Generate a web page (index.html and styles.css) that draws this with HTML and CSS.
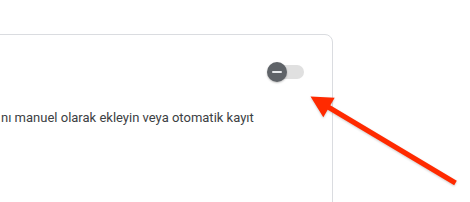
FILE: index.html
```html
<!DOCTYPE html>
<html lang="tr">
<head>
<meta charset="utf-8">
<link rel="stylesheet" href="styles.css">
</head>
<body>
<div class="card">
  <div class="card-head">
    <div class="toggle">
      <span class="track"></span>
      <span class="knob"><span class="minus"></span></span>
    </div>
  </div>
  <p class="desc">nı manuel olarak ekleyin veya otomatik kayıt</p>
</div>
<svg class="arrow" width="470" height="202" viewBox="0 0 470 202" xmlns="http://www.w3.org/2000/svg">
  <polygon points="310.5,96.5 334.7,97.8 330.3,105.3 456.8,180.8 454.2,185.2 327.7,109.7 323.3,117.2" fill="#ff2a00"/>
</svg>
</body>
</html>
```
FILE: styles.css
```css
html, body {
  margin: 0;
  padding: 0;
  background: #ffffff;
  width: 470px;
  height: 202px;
  overflow: hidden;
}
body {
  position: relative;
  font-family: Roboto, "Noto Sans", sans-serif;
}
.card {
  margin: 34px 0 0 -24px;
  width: 357px;
  height: 200px;
  box-sizing: border-box;
  border: 1px solid #dadce0;
  border-radius: 8px;
  padding: 0 28px 0 24px;
}
.card-head {
  display: flex;
  justify-content: flex-end;
  padding-top: 27px;
}
.toggle {
  position: relative;
  width: 37px;
  height: 20px;
}
.track {
  position: absolute;
  left: 3px;
  top: 3px;
  width: 34px;
  height: 14px;
  border-radius: 7px;
  background: #e0e0e0;
}
.knob {
  position: absolute;
  left: 0;
  top: 0;
  width: 20px;
  height: 20px;
  border-radius: 50%;
  background: #5f6368;
  box-shadow: 0 1px 2px rgba(0,0,0,0.25);
  display: flex;
  align-items: center;
  justify-content: center;
}
.minus {
  width: 10px;
  height: 2px;
  background: #e8eaed;
  border-radius: 1px;
}
.desc {
  margin: 26px 0 0 0;
  font-size: 13px;
  line-height: 20px;
  color: #3c4043;
  white-space: nowrap;
}
.arrow {
  position: absolute;
  left: 0;
  top: 0;
  pointer-events: none;
  filter: drop-shadow(0 1px 1px rgba(0,0,0,0.2));
}
```
